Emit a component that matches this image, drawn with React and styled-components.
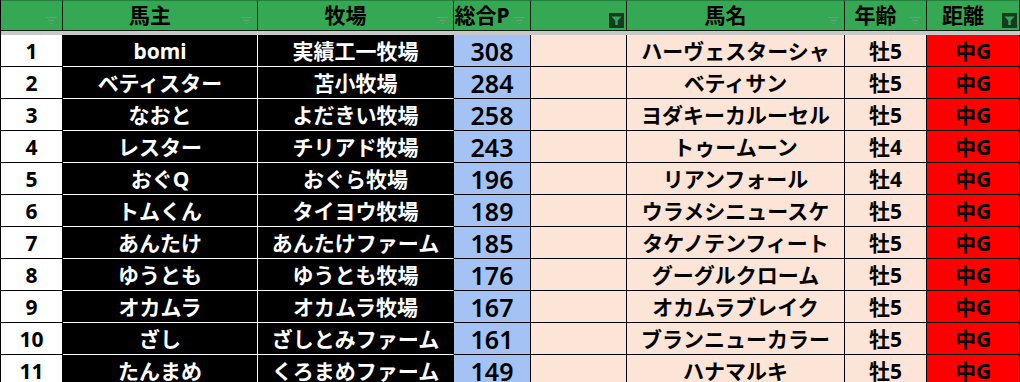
import React from "react";
import styled, { createGlobalStyle } from "styled-components";

const Global = createGlobalStyle`
  html, body { margin: 0; padding: 0; background: #fff; overflow: hidden; }
  body { font-family: "Noto Sans", "Noto Sans CJK JP", sans-serif; }
`;

const COLS = "62px 195px 196px 77px 96px 218px 82px 93px";

const Sheet = styled.div`
  width: 1020px;
  height: 382px;
  overflow: hidden;
  display: grid;
  grid-template-columns: ${COLS};
  grid-auto-rows: 32px;
  grid-template-rows: 31px 4px;
  border-left: 1px solid #000;
  box-sizing: border-box;
`;

const HeadCell = styled.div`
  position: relative;
  box-sizing: border-box;
  background: #34a853;
  border-top: 1px solid #23813d;
  border-right: 1px solid #0d1f12;
  border-bottom: 1px solid #0d1f12;
  display: flex;
  align-items: center;
  justify-content: center;
  padding-right: 20px;
  font-size: 21px;
  font-weight: 700;
  color: #000;
  white-space: nowrap;
  line-height: 1;
`;

const HeadButton = styled.span`
  position: absolute;
  right: ${(p) => (p.$filtered ? "2px" : "5px")};
  bottom: ${(p) => (p.$filtered ? "2px" : "5px")};
  display: flex;
`;

const Band = styled.div`
  grid-column: 1 / -1;
  background: #c8c8c8;
`;

const KIND = {
  num: { bg: "#fff", fg: "#000", line: "#000", size: 21, weight: 700 },
  owner: { bg: "#000", fg: "#fff", line: "#fff", size: 21, weight: 700 },
  farm: { bg: "#000", fg: "#fff", line: "#fff", right: "#000", size: 21, weight: 700 },
  points: { bg: "#a4c2f4", fg: "#000", line: "#000", size: 25, weight: 600 },
  blank: { bg: "#fce4d6", fg: "#000", line: "#000", size: 21, weight: 700 },
  horse: { bg: "#fce4d6", fg: "#000", line: "#000", size: 21, weight: 700 },
  age: { bg: "#fce4d6", fg: "#000", line: "#000", size: 21, weight: 700 },
  dist: { bg: "#ff0000", fg: "#000", line: "#000", size: 21, weight: 700 },
};

const Cell = styled.div`
  box-sizing: border-box;
  background: ${(p) => KIND[p.$kind].bg};
  color: ${(p) => KIND[p.$kind].fg};
  border-bottom: 1px solid ${(p) => KIND[p.$kind].line};
  border-right: 1px solid ${(p) => KIND[p.$kind].right || KIND[p.$kind].line};
  font-size: ${(p) => KIND[p.$kind].size}px;
  font-weight: ${(p) => KIND[p.$kind].weight};
  display: flex;
  align-items: center;
  justify-content: center;
  padding-top: 2px;
  line-height: 1;
  white-space: nowrap;
`;

const SortIcon = () => (
  <svg width="11" height="9" viewBox="0 0 11 9">
    <path d="M0 1.5h11M2.5 4.5h6M4.5 7.5h2" stroke="#7f9585" strokeWidth="1" />
  </svg>
);

const FilterIcon = () => (
  <svg width="15" height="15" viewBox="0 0 15 15">
    <rect width="15" height="15" fill="#173a20" />
    <path d="M2.5 3.5h10l-3.8 4.2v4.3h-2.4v-4.3z" fill="#34a853" />
  </svg>
);

const headers = [
  { label: "", filtered: false },
  { label: "馬主", filtered: false },
  { label: "牧場", filtered: false },
  { label: "総合P", filtered: false },
  { label: "", filtered: true },
  { label: "馬名", filtered: false },
  { label: "年齢", filtered: false },
  { label: "距離", filtered: true },
];

const rows = [
  [1, "bomi", "実績工一牧場", 308, "ハーヴェスターシャ", "牡5"],
  [2, "ベティスター", "苫小牧場", 284, "ベティサン", "牡5"],
  [3, "なおと", "よだきい牧場", 258, "ヨダキーカルーセル", "牡5"],
  [4, "レスター", "チリアド牧場", 243, "トゥームーン", "牡4"],
  [5, "おぐQ", "おぐら牧場", 196, "リアンフォール", "牡4"],
  [6, "トムくん", "タイヨウ牧場", 189, "ウラメシニュースケ", "牡5"],
  [7, "あんたけ", "あんたけファーム", 185, "タケノテンフィート", "牡5"],
  [8, "ゆうとも", "ゆうとも牧場", 176, "グーグルクローム", "牡5"],
  [9, "オカムラ", "オカムラ牧場", 167, "オカムラブレイク", "牡5"],
  [10, "ざし", "ざしとみファーム", 161, "ブランニューカラー", "牡5"],
  [11, "たんまめ", "くろまめファーム", 149, "ハナマルキ", "牡5"],
];

export default function App() {
  return (
    <>
      <Global />
      <Sheet>
        {headers.map((h, i) => (
          <HeadCell key={i}>
            {h.label}
            <HeadButton $filtered={h.filtered}>
              {h.filtered ? <FilterIcon /> : <SortIcon />}
            </HeadButton>
          </HeadCell>
        ))}
        <Band />
        {rows.map(([n, owner, farm, pts, horse, age]) => (
          <React.Fragment key={n}>
            <Cell $kind="num">{n}</Cell>
            <Cell $kind="owner">{owner}</Cell>
            <Cell $kind="farm">{farm}</Cell>
            <Cell $kind="points">{pts}</Cell>
            <Cell $kind="blank" />
            <Cell $kind="horse">{horse}</Cell>
            <Cell $kind="age">{age}</Cell>
            <Cell $kind="dist">中G</Cell>
          </React.Fragment>
        ))}
      </Sheet>
    </>
  );
}
